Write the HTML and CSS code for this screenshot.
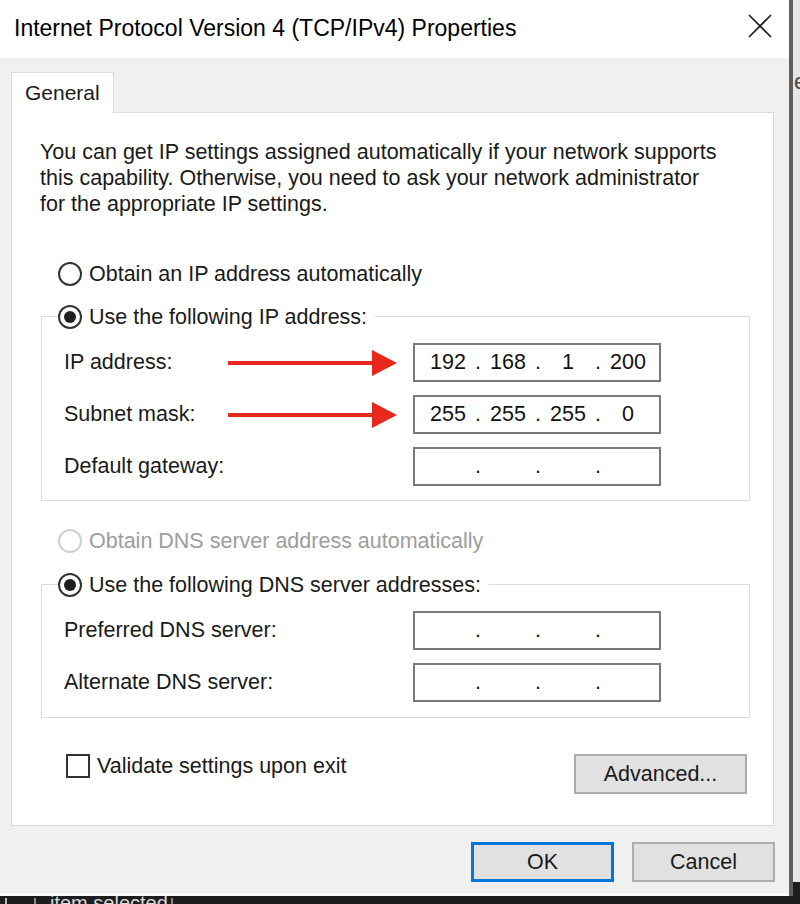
FILE: index.html
```html
<!DOCTYPE html>
<html lang="en">
<head>
<meta charset="utf-8">
<title>Internet Protocol Version 4 (TCP/IPv4) Properties</title>
<link rel="stylesheet" href="styles.css">
</head>
<body>
<div class="screen">
  <div class="dialog">
    <div class="titlebar">
      <span class="title">Internet Protocol Version 4 (TCP/IPv4) Properties</span>
      <svg class="close" viewBox="0 0 24 24"><path d="M1 1L23 23M23 1L1 23" stroke="#1a1a1a" stroke-width="1.6" fill="none"/></svg>
    </div>
    <div class="tabs"><div class="tab">General</div></div>
    <div class="panel">
      <p class="desc">You can get IP settings assigned automatically if your network supports<br>this capability. Otherwise, you need to ask your network administrator<br>for the appropriate IP settings.</p>

      <div class="radio-row"><span class="radio"></span><span>Obtain an IP address automatically</span></div>

      <div class="group">
        <div class="legend"><span class="radio checked"></span><span>Use the following IP address:</span></div>
        <div class="rows">
          <div class="row">
            <span class="lbl">IP address:</span>
            <svg class="arrow" viewBox="0 0 169 26"><rect x="0" y="11" width="147" height="4" fill="#e8271d"/><polygon points="144,0 169,13 144,26" fill="#e8271d"/></svg>
            <div class="ip"><span>192</span><span>.</span><span>168</span><span>.</span><span>1</span><span>.</span><span>200</span></div>
          </div>
          <div class="row">
            <span class="lbl">Subnet mask:</span>
            <svg class="arrow" viewBox="0 0 169 26"><rect x="0" y="11" width="147" height="4" fill="#e8271d"/><polygon points="144,0 169,13 144,26" fill="#e8271d"/></svg>
            <div class="ip"><span>255</span><span>.</span><span>255</span><span>.</span><span>255</span><span>.</span><span>0</span></div>
          </div>
          <div class="row">
            <span class="lbl">Default gateway:</span>
            <span></span>
            <div class="ip"><span></span><span>.</span><span></span><span>.</span><span></span><span>.</span><span></span></div>
          </div>
        </div>
      </div>

      <div class="radio-row disabled second"><span class="radio"></span><span>Obtain DNS server address automatically</span></div>

      <div class="group dns">
        <div class="legend"><span class="radio checked"></span><span>Use the following DNS server addresses:</span></div>
        <div class="rows">
          <div class="row">
            <span class="lbl">Preferred DNS server:</span>
            <span></span>
            <div class="ip"><span></span><span>.</span><span></span><span>.</span><span></span><span>.</span><span></span></div>
          </div>
          <div class="row">
            <span class="lbl">Alternate DNS server:</span>
            <span></span>
            <div class="ip"><span></span><span>.</span><span></span><span>.</span><span></span><span>.</span><span></span></div>
          </div>
        </div>
      </div>

      <div class="bottom">
        <div class="check"><span class="box"></span><span>Validate settings upon exit</span></div>
        <button class="btn adv">Advanced...</button>
      </div>
    </div>
    <div class="actions">
      <button class="btn ok">OK</button>
      <button class="btn">Cancel</button>
    </div>
  </div>
  <div class="edge"></div>
  <div class="side"><span>e</span></div>
  <div class="footer">
    <span class="sep light"></span>
    <span class="sep"></span>
    <span class="ftext">item selected</span>
    <span class="sep"></span>
  </div>
</div>
</body>
</html>
```

FILE: styles.css
```css
body {
  margin: 0;
  width: 800px;
  height: 904px;
  overflow: hidden;
  font-family: "Liberation Sans", Arial, sans-serif;
}

.screen {
  display: grid;
  grid-template-columns: 789px 4px 7px;
  grid-template-rows: 896px 8px;
  width: 800px;
  height: 904px;
  background: #1d1d1d;
}

.dialog {
  grid-column: 1;
  grid-row: 1;
  background: #f0f0f0;
  border-bottom: 3px solid #fafafa;
  box-sizing: border-box;
  display: flex;
  flex-direction: column;
  overflow: hidden;
}

.titlebar {
  height: 58px;
  flex: none;
  background: #fff;
  display: flex;
  align-items: center;
  justify-content: space-between;
  padding: 0 17px 0 14px;
  box-sizing: border-box;
}

.title {
  font-size: 23px;
  color: #000;
  margin-top: -2px;
  white-space: nowrap;
}

.close {
  width: 24px;
  height: 24px;
  margin-top: -6px;
}

.tabs {
  display: flex;
  margin: 14px 0 0 11px;
}

.tab {
  position: relative;
  width: 103px;
  height: 41px;
  box-sizing: border-box;
  padding-left: 13px;
  border: 1px solid #d9d9d9;
  border-bottom: none;
  background: #fff;
  font-size: 21px;
  color: #1a1a1a;
  display: flex;
  align-items: center;
  margin-bottom: -1px;
}

.panel {
  margin-left: 11px;
  width: 763px;
  height: 714px;
  flex: none;
  box-sizing: border-box;
  border: 1px solid #d9d9d9;
  background: #fff;
  font-size: 21.5px;
  color: #1a1a1a;
  white-space: nowrap;
}

.desc {
  margin: 26px 0 0 28px;
  line-height: 26px;
}

.radio-row {
  display: flex;
  align-items: center;
  gap: 7px;
  height: 30px;
  margin: 42px 0 0 46px;
}

.radio-row.second {
  margin-top: 25px;
}

.radio {
  width: 24px;
  height: 24px;
  box-sizing: border-box;
  border: 2px solid #333;
  border-radius: 50%;
  background: #fff;
  display: flex;
  align-items: center;
  justify-content: center;
  flex: none;
}

.radio.checked::after {
  content: "";
  width: 12px;
  height: 12px;
  border-radius: 50%;
  background: #1f1f1f;
}

.disabled {
  color: #9d9d9d;
}

.disabled .radio {
  border-color: #d0d0d0;
}

.group {
  margin: 27px 0 0 29px;
  width: 709px;
  box-sizing: border-box;
  border: 1px solid #dcdcdc;
  padding: 0 0 14px 22px;
}

.group.dns {
  margin-top: 28px;
  padding-bottom: 15px;
}

.legend {
  display: flex;
  align-items: center;
  gap: 7px;
  width: fit-content;
  height: 30px;
  margin: -15px 0 0 -6px;
  padding-right: 8px;
  background: #fff;
}

.rows {
  display: flex;
  flex-direction: column;
  gap: 13px;
  margin-top: 11px;
}

.row {
  display: grid;
  grid-template-columns: 164px 185px 248px;
  align-items: center;
  height: 39px;
}

.arrow {
  display: block;
  width: 169px;
  height: 26px;
}

.ip {
  height: 39px;
  box-sizing: border-box;
  border: 2px solid #7a7a7a;
  background: #fff;
  display: grid;
  grid-template-columns: 52px 8px 52px 8px 52px 8px 52px;
  padding-left: 7px;
  align-items: center;
  text-align: center;
  color: #111;
}

.bottom {
  display: flex;
  justify-content: space-between;
  align-items: flex-start;
  margin: 36px 26px 0 54px;
}

.check {
  display: flex;
  align-items: center;
  gap: 7px;
  height: 24px;
}

.box {
  width: 24px;
  height: 24px;
  box-sizing: border-box;
  border: 2px solid #333;
  background: #fff;
}

.btn {
  height: 40px;
  box-sizing: border-box;
  padding: 0;
  background: #e1e1e1;
  border: 2px solid #adadad;
  font-family: "Liberation Sans", Arial, sans-serif;
  font-size: 21.5px;
  color: #1a1a1a;
}

.btn.adv {
  width: 173px;
}

.actions {
  display: flex;
  justify-content: flex-end;
  gap: 18px;
  margin-top: 16px;
  padding-right: 14px;
}

.actions .btn {
  width: 143px;
}

.btn.ok {
  border: 3px solid #0078d7;
}

.edge {
  grid-column: 2;
  grid-row: 1;
  background: #5f5f5f;
}

.side {
  grid-column: 3;
  grid-row: 1;
  height: 882px;
  align-self: start;
  background: #e6e6e6;
  overflow: hidden;
  padding: 71px 0 0 1px;
  box-sizing: border-box;
  font-size: 22px;
  line-height: 22px;
  color: #444;
}

.footer {
  grid-column: 1 / 4;
  grid-row: 2;
  display: flex;
  align-items: flex-start;
  overflow: hidden;
  color: #d8d8d8;
  font-size: 20px;
  line-height: 20px;
  padding-left: 5px;
}

.sep {
  width: 2px;
  height: 8px;
  background: #8a8a8a;
  margin-top: 2px;
}

.sep.light {
  background: #b8b8b8;
  margin-right: 27px;
}

.ftext {
  margin: -3px 3px 0 14px;
}
```
